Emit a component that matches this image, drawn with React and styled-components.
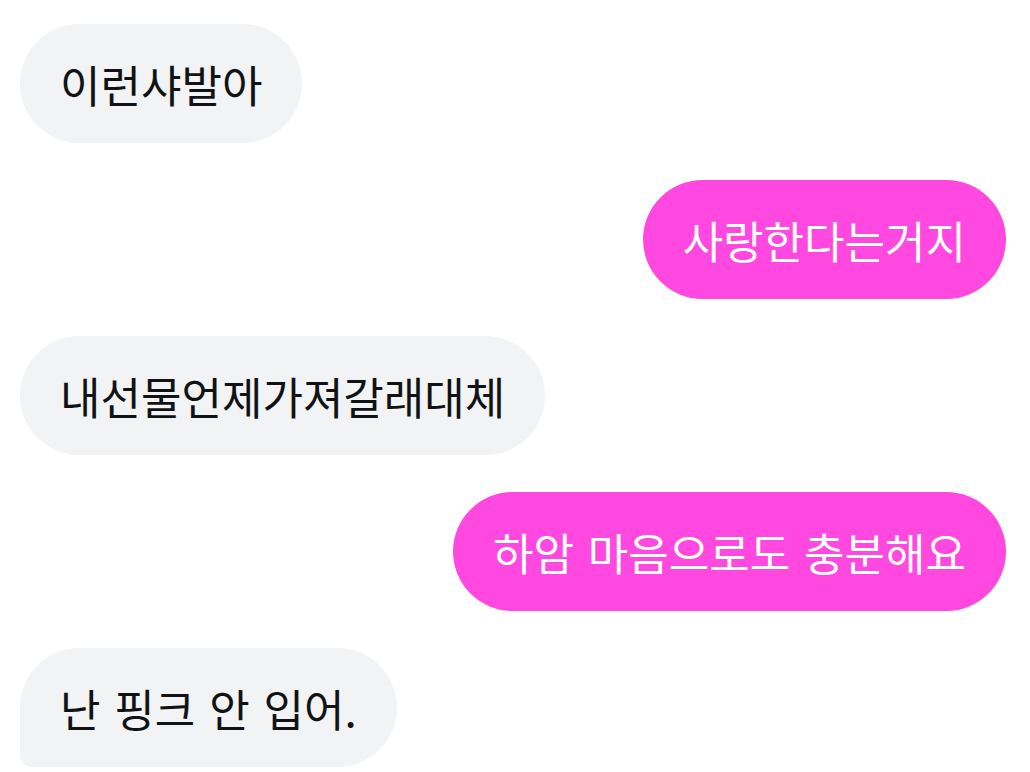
import React from "react";
import styled, { createGlobalStyle } from "styled-components";

const Global = createGlobalStyle`
  html, body { margin: 0; padding: 0; background: #ffffff; }
  body { font-family: "Noto Sans CJK KR", "Noto Sans", sans-serif; }
`;

const Thread = styled.div`
  display: flex;
  flex-direction: column;
  gap: 37px;
  padding: 24px 24px 0 20px;
`;

const Row = styled.div`
  display: flex;
  justify-content: ${(p) => (p.$mine ? "flex-end" : "flex-start")};
`;

const Bubble = styled.div`
  box-sizing: border-box;
  height: 119px;
  display: flex;
  align-items: center;
  padding: 0 40px;
  border-radius: 60px;
  ${(p) => (p.$tail ? "border-bottom-left-radius: 12px;" : "")}
  background: ${(p) => (p.$mine ? "#ff48e0" : "#f2f3f5")};
  color: ${(p) => (p.$mine ? "#ffffff" : "#111214")};
  font-size: 44px;
  font-weight: 400;
  line-height: 1;
  word-spacing: 4px;
  white-space: pre;
`;

const messages = [
  { text: "이런샤발아", mine: false },
  { text: "사랑한다는거지", mine: true },
  { text: "내선물언제가져갈래대체", mine: false },
  { text: "하암 마음으로도 충분해요", mine: true },
  { text: "난 핑크 안 입어.", mine: false, tail: true },
];

export default function App() {
  return (
    <>
      <Global />
      <Thread>
        {messages.map((m, i) => (
          <Row key={i} $mine={m.mine}>
            <Bubble $mine={m.mine} $tail={m.tail}>
              {m.text}
            </Bubble>
          </Row>
        ))}
      </Thread>
    </>
  );
}
